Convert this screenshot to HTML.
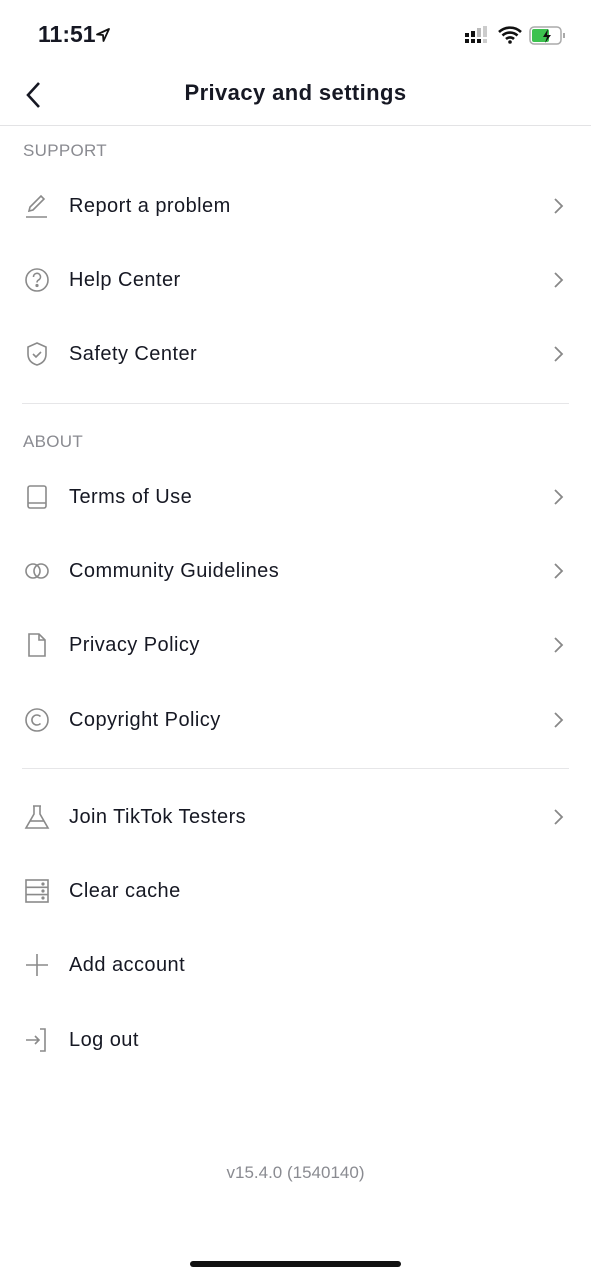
<!DOCTYPE html>
<html><head><meta charset="utf-8"><style>
body{margin:0;width:591px;height:1280px;background:#fff;font-family:"Liberation Sans",sans-serif;position:relative;overflow:hidden;color:#161823}
.a{position:absolute}
.t{position:absolute;left:69px;font-size:20px;line-height:24px;letter-spacing:0.45px;transform:translateY(-50%)}
.h{position:absolute;left:23px;font-size:17px;letter-spacing:0.3px;color:#8a8b91;transform:translateY(-50%)}
.ic{position:absolute;left:23px;width:28px;height:28px;transform:translateY(-50%)}
.ch{position:absolute;left:549px;width:20px;height:20px;transform:translateY(-50%)}
.sep{position:absolute;left:22px;right:22px;height:1px;background:#e6e6e8}
</style></head><body>
<div class="a" style="left:38px;top:21px;font-size:23px;font-weight:bold">11:51</div>
<svg class="a" style="left:95px;top:27px" width="16" height="16" viewBox="0 0 16 16"><path d="M14 2L2 7.5l6 .5.5 6z" fill="none" stroke="#111" stroke-width="1.8" stroke-linejoin="round"/></svg>
<svg class="a" style="left:465px;top:26px" width="24" height="18" viewBox="0 0 24 18"><rect x="0" y="13" width="4" height="4" fill="#111"/><rect x="6" y="13" width="4" height="4" fill="#111"/><rect x="12" y="13" width="4" height="4" fill="#111"/><rect x="18" y="13" width="4" height="4" fill="#ccc"/><rect x="0" y="7" width="4" height="4" fill="#111"/><rect x="6" y="5" width="4" height="6" fill="#111"/><rect x="12" y="2" width="4" height="9" fill="#bbb"/><rect x="18" y="0" width="4" height="11" fill="#ccc"/></svg>
<svg class="a" style="left:498px;top:26px" width="24" height="18" viewBox="0 0 24 18"><path d="M1 6a16 16 0 0 1 22 0M4.5 9.5a11 11 0 0 1 15 0M8 13a6 6 0 0 1 8 0" fill="none" stroke="#111" stroke-width="2.6"/><circle cx="12" cy="16" r="1.8" fill="#111"/></svg>
<svg class="a" style="left:529px;top:26px" width="40" height="20" viewBox="0 0 40 20"><rect x="1" y="1" width="31" height="17" rx="4" fill="none" stroke="#aaa" stroke-width="1.5"/><rect x="3" y="3" width="17" height="13" rx="2" fill="#3cc24f"/><path d="M19 3l-5 8h4l-2 6 6-8h-4z" fill="#111"/><rect x="34" y="7" width="2" height="5" fill="#aaa"/></svg>
<svg class="a" style="left:24px;top:81px" width="18" height="28" viewBox="0 0 18 28"><path d="M15 2L4 14l11 12" fill="none" stroke="#161823" stroke-width="2.6"/></svg>
<div class="a" style="left:0;width:591px;top:80px;text-align:center;font-size:22px;font-weight:bold;letter-spacing:0.4px">Privacy and settings</div>
<div class="a" style="left:0;right:0;top:125px;height:1px;background:#e3e3e5"></div>

<div class="h" style="top:151px">SUPPORT</div>
<div class="h" style="top:442px">ABOUT</div>
<div class="sep" style="top:403px"></div>
<div class="sep" style="top:768px"></div>

<svg class="ic" style="top:206px" viewBox="0 0 28 28" fill="none" stroke="#8a8a8a" stroke-width="1.6"><path d="M6 19l1-4 11-11 3 3-11 11z"/><path d="M3 25h21"/></svg>
<svg class="ic" style="top:280px" viewBox="0 0 28 28" fill="none" stroke="#8a8a8a" stroke-width="1.6"><circle cx="14" cy="14" r="11"/><path d="M10.5 11a3.5 3.5 0 1 1 5 3c-1 .6-1.5 1.2-1.5 2.5"/><circle cx="14" cy="19.5" r=".8" fill="#8a8a8a"/></svg>
<svg class="ic" style="top:354px" viewBox="0 0 28 28" fill="none" stroke="#8a8a8a" stroke-width="1.6"><path d="M14 3l9 4v7c0 6-4 9.5-9 11-5-1.5-9-5-9-11V7z"/><path d="M10 14l3 3 5-5"/></svg>
<svg class="ic" style="top:497px" viewBox="0 0 28 28" fill="none" stroke="#8a8a8a" stroke-width="1.6"><rect x="5" y="3" width="18" height="22" rx="2"/><path d="M5 20h18"/></svg>
<svg class="ic" style="top:571px" viewBox="0 0 28 28" fill="none" stroke="#8a8a8a" stroke-width="1.6"><circle cx="10" cy="14" r="7"/><circle cx="18" cy="14" r="7"/></svg>
<svg class="ic" style="top:645px" viewBox="0 0 28 28" fill="none" stroke="#8a8a8a" stroke-width="1.6"><path d="M6 3h10l6 6v16H6z"/><path d="M16 3v6h6"/></svg>
<svg class="ic" style="top:720px" viewBox="0 0 28 28" fill="none" stroke="#8a8a8a" stroke-width="1.6"><circle cx="14" cy="14" r="11"/><path d="M17.5 10.5a5 5 0 1 0 0 7"/></svg>
<svg class="ic" style="top:817px" viewBox="0 0 28 28" fill="none" stroke="#8a8a8a" stroke-width="1.6"><path d="M10 3h8M11 3v8L3 25h22L17 11V3"/><path d="M7 18h14"/></svg>
<svg class="ic" style="top:891px" viewBox="0 0 28 28" fill="none" stroke="#8a8a8a" stroke-width="1.6"><rect x="3" y="3" width="22" height="22"/><path d="M3 10.3h22M3 17.6h22"/><circle cx="20" cy="7" r=".8" fill="#8a8a8a"/><circle cx="20" cy="14" r=".8" fill="#8a8a8a"/><circle cx="20" cy="21" r=".8" fill="#8a8a8a"/></svg>
<svg class="ic" style="top:965px" viewBox="0 0 28 28" fill="none" stroke="#8a8a8a" stroke-width="1.6"><path d="M14 3v22M3 14h22"/></svg>
<svg class="ic" style="top:1040px" viewBox="0 0 28 28" fill="none" stroke="#8a8a8a" stroke-width="1.6"><path d="M17 3h5v22h-5"/><path d="M3 14h13M12 10l4 4-4 4"/></svg>

<div class="t" style="top:206px">Report a problem</div>
<div class="t" style="top:280px">Help Center</div>
<div class="t" style="top:354px">Safety Center</div>
<div class="t" style="top:497px">Terms of Use</div>
<div class="t" style="top:571px">Community Guidelines</div>
<div class="t" style="top:645px">Privacy Policy</div>
<div class="t" style="top:720px">Copyright Policy</div>
<div class="t" style="top:817px">Join TikTok Testers</div>
<div class="t" style="top:891px">Clear cache</div>
<div class="t" style="top:965px">Add account</div>
<div class="t" style="top:1040px">Log out</div>

<svg class="ch" style="top:206px" viewBox="0 0 20 20"><path d="M6 3l7 7-7 7" fill="none" stroke="#888" stroke-width="1.8"/></svg>
<svg class="ch" style="top:280px" viewBox="0 0 20 20"><path d="M6 3l7 7-7 7" fill="none" stroke="#888" stroke-width="1.8"/></svg>
<svg class="ch" style="top:354px" viewBox="0 0 20 20"><path d="M6 3l7 7-7 7" fill="none" stroke="#888" stroke-width="1.8"/></svg>
<svg class="ch" style="top:497px" viewBox="0 0 20 20"><path d="M6 3l7 7-7 7" fill="none" stroke="#888" stroke-width="1.8"/></svg>
<svg class="ch" style="top:571px" viewBox="0 0 20 20"><path d="M6 3l7 7-7 7" fill="none" stroke="#888" stroke-width="1.8"/></svg>
<svg class="ch" style="top:645px" viewBox="0 0 20 20"><path d="M6 3l7 7-7 7" fill="none" stroke="#888" stroke-width="1.8"/></svg>
<svg class="ch" style="top:720px" viewBox="0 0 20 20"><path d="M6 3l7 7-7 7" fill="none" stroke="#888" stroke-width="1.8"/></svg>
<svg class="ch" style="top:817px" viewBox="0 0 20 20"><path d="M6 3l7 7-7 7" fill="none" stroke="#888" stroke-width="1.8"/></svg>

<div class="a" style="left:0;width:591px;top:1163px;text-align:center;font-size:17px;color:#8a8b91">v15.4.0 (1540140)</div>
<div class="a" style="left:190px;width:211px;top:1261px;height:6px;border-radius:3px;background:#111"></div>
</body></html>
